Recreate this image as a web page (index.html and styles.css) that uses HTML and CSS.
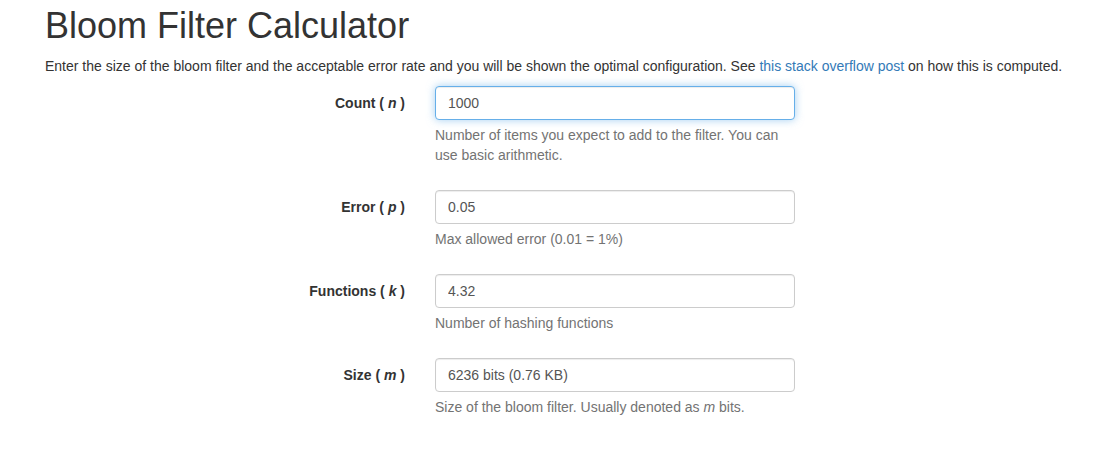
FILE: index.html
```html
<!DOCTYPE html>
<html lang="en">
<head>
<meta charset="utf-8">
<title>Bloom Filter Calculator</title>
<link rel="stylesheet" href="styles.css">
</head>
<body>
<div class="container">
  <h1 class="title">Bloom Filter Calculator</h1>
  <p class="intro">Enter the size of the bloom filter and the acceptable error rate and you will be shown the optimal configuration. See <a class="link" href="#">this stack overflow post</a> on how this is computed.</p>
  <form class="form">
    <div class="form-group">
      <label class="control-label" for="n">Count ( <i>n</i> )</label>
      <div class="field">
        <input id="n" class="form-control is-focus" type="text" value="1000">
        <span class="help-block">Number of items you expect to add to the filter. You can use basic arithmetic.</span>
      </div>
    </div>
    <div class="form-group">
      <label class="control-label" for="p">Error ( <i>p</i> )</label>
      <div class="field">
        <input id="p" class="form-control" type="text" value="0.05">
        <span class="help-block">Max allowed error (0.01 = 1%)</span>
      </div>
    </div>
    <div class="form-group">
      <label class="control-label" for="k">Functions ( <i>k</i> )</label>
      <div class="field">
        <input id="k" class="form-control" type="text" value="4.32">
        <span class="help-block">Number of hashing functions</span>
      </div>
    </div>
    <div class="form-group">
      <label class="control-label" for="m">Size ( <i>m</i> )</label>
      <div class="field">
        <input id="m" class="form-control" type="text" value="6236 bits (0.76 KB)">
        <span class="help-block">Size of the bloom filter. Usually denoted as <i>m</i> bits.</span>
      </div>
    </div>
  </form>
</div>
</body>
</html>
```
FILE: styles.css
```css
html, body {
  margin: 0;
  padding: 0;
  background: #fff;
}
body {
  font-family: "Liberation Sans", Arial, Helvetica, sans-serif;
  font-size: 14px;
  line-height: 20px;
  color: #333;
}
.container {
  margin-left: 30px;
  padding: 0 15px;
}
.title {
  font-size: 36px;
  font-weight: 500;
  line-height: 1.1;
  margin: 6px 0 10px;
  color: #333;
}
.intro {
  margin: 0 0 10px;
}
.link {
  color: #337ab7;
  text-decoration: none;
}
.form {
  margin: 0 -15px;
}
.form-group {
  display: grid;
  grid-template-columns: 390px 390px;
  margin-bottom: 15px;
}
.control-label {
  padding: 7px 15px 0;
  text-align: right;
  font-weight: bold;
}
.field {
  padding: 0 15px;
}
.form-control {
  display: block;
  width: 100%;
  height: 34px;
  box-sizing: border-box;
  padding: 6px 12px;
  font-family: inherit;
  font-size: 14px;
  line-height: 20px;
  color: #555;
  background: #fff;
  border: 1px solid #ccc;
  border-radius: 4px;
  box-shadow: inset 0 1px 1px rgba(0,0,0,.075);
  outline: none;
  margin: 0;
}
.form-control.is-focus {
  border-color: #66afe9;
  box-shadow: inset 0 1px 1px rgba(0,0,0,.075), 0 0 8px rgba(102,175,233,.6);
}
.help-block {
  display: block;
  margin: 5px 0 10px;
  color: #737373;
}
```
